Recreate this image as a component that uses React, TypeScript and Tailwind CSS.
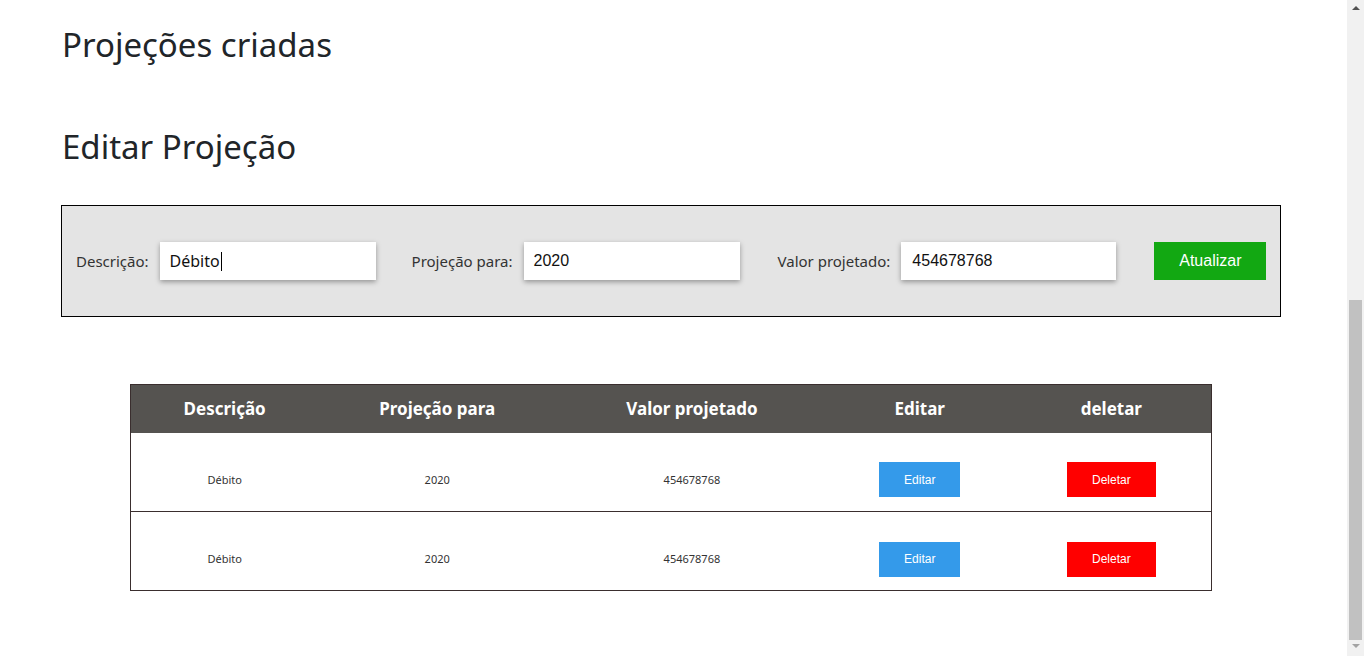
import React from "react";

const rows = [
  { d: "Débito", p: "2020", v: "454678768" },
  { d: "Débito", p: "2020", v: "454678768" },
];

export default function App() {
  return (
    <div className="flex h-[656px] w-[1364px] overflow-hidden bg-white" style={{ fontFamily: '"Noto Sans", "Open Sans", sans-serif' }}>
      <div className="flex-1">
        <div className="pl-[62px]">
          <h1 className="mt-[23px] text-[33px] leading-[44px] text-[#212529] font-normal">Projeções criadas</h1>
          <h2 className="mt-[58px] text-[33px] leading-[44px] text-[#212529] font-normal">Editar Projeção</h2>
        </div>
        <div className="ml-[61px] mt-[36px] flex h-[112px] w-[1220px] items-center border border-black bg-[#e4e4e4] pl-[14px]">
          <label className="text-[15px] text-[#333]">Descrição:</label>
          <div className="ml-[11px] flex h-[38px] w-[216px] items-center bg-white pl-[10px] text-[16px] text-[#111] shadow-[0_2px_5px_rgba(0,0,0,0.35)]">
            Débito<span className="ml-[1px] inline-block h-[19px] w-[1px] bg-black" />
          </div>
          <label className="ml-[36px] text-[15px] text-[#333]">Projeção para:</label>
          <div className="ml-[11px] flex h-[38px] w-[216px] items-center bg-white pl-[10px] text-[16px] text-[#111] shadow-[0_2px_5px_rgba(0,0,0,0.35)]" style={{ fontFamily: '"Liberation Sans", Arial, sans-serif' }}>
            2020
          </div>
          <label className="ml-[38px] text-[15px] text-[#333]">Valor projetado:</label>
          <div className="ml-[11px] flex h-[38px] w-[215px] items-center bg-white pl-[11px] text-[16px] text-[#111] shadow-[0_2px_5px_rgba(0,0,0,0.35)]" style={{ fontFamily: '"Liberation Sans", Arial, sans-serif' }}>
            454678768
          </div>
          <button className="ml-[38px] h-[38px] w-[112px] bg-[#12a812] text-[16px] text-white" style={{ fontFamily: '"Liberation Sans", Arial, sans-serif' }}>
            Atualizar
          </button>
        </div>
        <table className="ml-[130px] mt-[67px] w-[1082px] border-collapse border border-[#3a2e2e]">
          <thead>
            <tr className="h-[48px] bg-[#555350] text-[17px] font-bold text-white">
              <th className="w-[188px] font-bold">Descrição</th>
              <th className="w-[238px] font-bold">Projeção para</th>
              <th className="w-[272px] font-bold">Valor projetado</th>
              <th className="w-[184px] font-bold">Editar</th>
              <th className="w-[200px] font-bold">deletar</th>
            </tr>
          </thead>
          <tbody>
            {rows.map((r, i) => (
              <tr key={i} className={`h-[79px] text-center text-[11px] text-[#333] ${i === 0 ? "border-b border-[#3a2e2e]" : ""}`}>
                <td className="pt-[16px]">{r.d}</td>
                <td className="pt-[16px]">{r.p}</td>
                <td className="pt-[16px]">{r.v}</td>
                <td className="pt-[16px]">
                  <button className="h-[35px] w-[81px] bg-[#349aea] text-[12px] text-white" style={{ fontFamily: '"Liberation Sans", Arial, sans-serif' }}>Editar</button>
                </td>
                <td className="pt-[16px]">
                  <button className="h-[35px] w-[89px] bg-[#ff0000] text-[12px] text-white" style={{ fontFamily: '"Liberation Sans", Arial, sans-serif' }}>Deletar</button>
                </td>
              </tr>
            ))}
          </tbody>
        </table>
      </div>
      <div className="flex h-[656px] w-[17px] flex-col items-center bg-[#f1f1f1]">
        <div className="mt-[6px] h-0 w-0 border-x-[4px] border-b-[4px] border-x-transparent border-b-[#505050]" />
        <div className="mt-[290px] h-[340px] w-[13px] bg-[#c1c1c1]" />
        <div className="mt-[4px] h-0 w-0 border-x-[4px] border-t-[4px] border-x-transparent border-t-[#a3a3a3]" />
      </div>
    </div>
  );
}
